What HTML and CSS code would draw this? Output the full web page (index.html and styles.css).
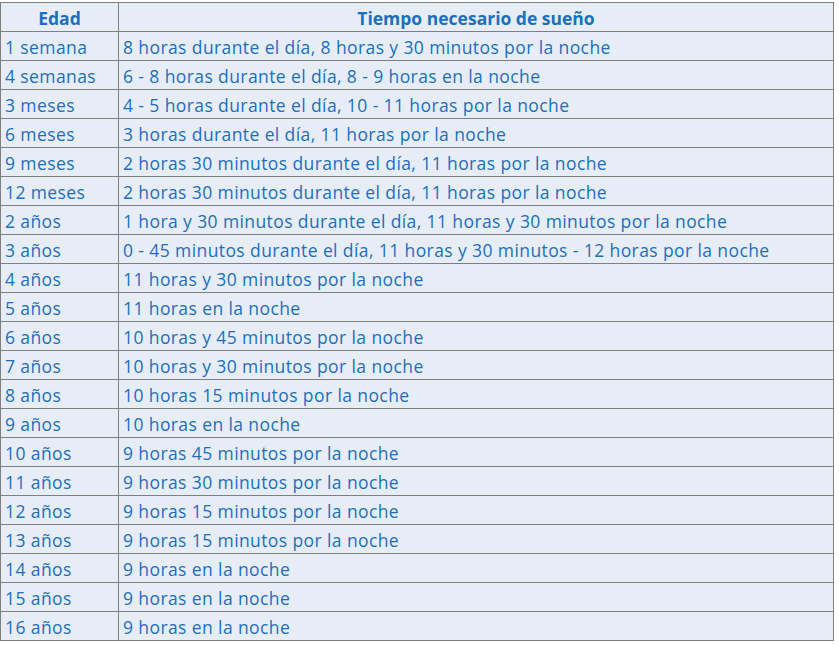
FILE: index.html
```html
<!DOCTYPE html>
<html lang="es">
<head>
<meta charset="utf-8">
<title>Tiempo necesario de sueño</title>
<link rel="stylesheet" href="styles.css">
</head>
<body>
<table class="sleep">
  <thead>
    <tr><th class="age">Edad</th><th>Tiempo necesario de sueño</th></tr>
  </thead>
  <tbody>
    <tr><td>1 semana</td><td>8 horas durante el día, 8 horas y 30 minutos por la noche</td></tr>
    <tr><td>4 semanas</td><td>6 - 8 horas durante el día, 8 - 9 horas en la noche</td></tr>
    <tr><td>3 meses</td><td>4 - 5 horas durante el día, 10 - 11 horas por la noche</td></tr>
    <tr><td>6 meses</td><td>3 horas durante el día, 11 horas por la noche</td></tr>
    <tr><td>9 meses</td><td>2 horas 30 minutos durante el día, 11 horas por la noche</td></tr>
    <tr><td>12 meses</td><td>2 horas 30 minutos durante el día, 11 horas por la noche</td></tr>
    <tr><td>2 años</td><td>1 hora y 30 minutos durante el día, 11 horas y 30 minutos por la noche</td></tr>
    <tr><td>3 años</td><td>0 - 45 minutos durante el día, 11 horas y 30 minutos - 12 horas por la noche</td></tr>
    <tr><td>4 años</td><td>11 horas y 30 minutos por la noche</td></tr>
    <tr><td>5 años</td><td>11 horas en la noche</td></tr>
    <tr><td>6 años</td><td>10 horas y 45 minutos por la noche</td></tr>
    <tr><td>7 años</td><td>10 horas y 30 minutos por la noche</td></tr>
    <tr><td>8 años</td><td>10 horas 15 minutos por la noche</td></tr>
    <tr><td>9 años</td><td>10 horas en la noche</td></tr>
    <tr><td>10 años</td><td>9 horas 45 minutos por la noche</td></tr>
    <tr><td>11 años</td><td>9 horas 30 minutos por la noche</td></tr>
    <tr><td>12 años</td><td>9 horas 15 minutos por la noche</td></tr>
    <tr><td>13 años</td><td>9 horas 15 minutos por la noche</td></tr>
    <tr><td>14 años</td><td>9 horas en la noche</td></tr>
    <tr><td>15 años</td><td>9 horas en la noche</td></tr>
    <tr><td>16 años</td><td>9 horas en la noche</td></tr>
  </tbody>
</table>
</body>
</html>
```

FILE: styles.css
```css
html, body {
  margin: 0;
  padding: 0;
  background: #ffffff;
}
body {
  padding: 2px 0 0 0;
}
.sleep {
  border-collapse: collapse;
  width: 834px;
  background: #e6edf6;
  font-family: "Open Sans", Lato, sans-serif;
  font-size: 17.5px;
  color: #1d6fbd;
  table-layout: fixed;
}
.sleep th, .sleep td {
  border: 1px solid #7f7f7f;
  height: 29px;
  padding: 2px 4px 0 4px;
  box-sizing: border-box;
  text-align: left;
  vertical-align: middle;
  white-space: nowrap;
  line-height: 26px;
}
.sleep td {
  letter-spacing: 0.4px;
}
.sleep th {
  text-align: center;
  font-weight: bold;
}
.sleep .age {
  width: 118px;
}
```
